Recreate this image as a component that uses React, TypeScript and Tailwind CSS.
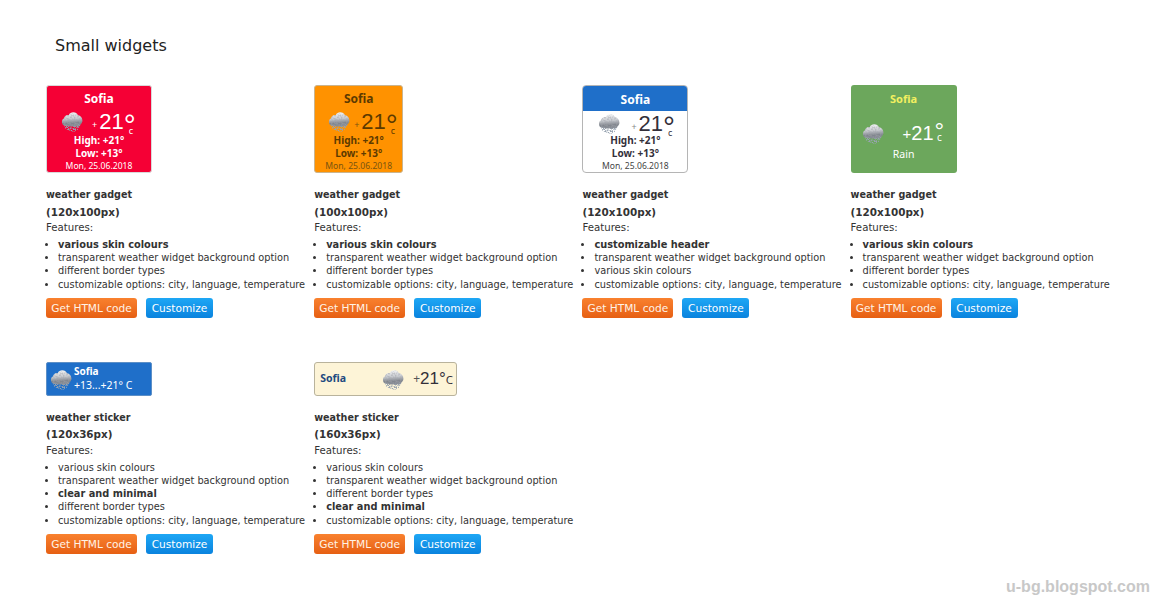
import type { ReactNode } from "react";

const font = "font-['DejaVu_Sans','Liberation_Sans',sans-serif]";
const tahoma = "font-['Noto_Sans','Liberation_Sans',sans-serif]";
const digits = "font-['Liberation_Sans',sans-serif]";

const CloudIcon = ({ className }: { className: string }) => (
  <svg viewBox="0 0 24 24" className={className}>
    <defs>
      <linearGradient id="cl" x1="0.45" y1="0" x2="0.55" y2="1">
        <stop offset="0%" stopColor="#f4f5f6" />
        <stop offset="45%" stopColor="#c6c9ce" />
        <stop offset="75%" stopColor="#80858d" />
        <stop offset="100%" stopColor="#8a9099" />
      </linearGradient>
      <filter id="mottle" x="0" y="0" width="100%" height="100%">
        <feTurbulence type="fractalNoise" baseFrequency="0.55" numOctaves="2" seed="4" result="n" />
        <feColorMatrix
          in="n"
          type="matrix"
          values="0 0 0 0 0.35  0 0 0 0 0.36  0 0 0 0 0.4  1.6 0 0 0 -0.62"
          result="spots"
        />
        <feComposite in="spots" in2="SourceGraphic" operator="in" result="clip" />
        <feMerge>
          <feMergeNode in="SourceGraphic" />
          <feMergeNode in="clip" />
        </feMerge>
      </filter>
      <filter id="stipple" x="0" y="0" width="100%" height="100%">
        <feTurbulence type="fractalNoise" baseFrequency="0.9" numOctaves="1" seed="9" result="n" />
        <feColorMatrix in="n" type="matrix" values="0 0 0 0 0  0 0 0 0 0  0 0 0 0 0  0 5 0 0 -2.200" result="a" />
        <feComposite in="SourceGraphic" in2="a" operator="in" />
      </filter>
    </defs>
    <path d="M3 15c5 2 13 2 19 -.5L20 20l-4 3.500H8L4 20z" fill="#97a3b0" filter="url(#stipple)" />
    <path
      d="M2.800 16.500C.4 15 .4 10.500 3.200 9.400 3.500 6.400 6.500 4.800 8.500 5.600 10 1.400 17 1.400 18.500 5.800c3 .4 5 3 4.800 6 0 2-1 3.500-2.500 4.200-1 2-3 1.200-4.300 1.600-1.500.8-3 .6-4.500 0-1.500.6-3 .4-4 0-1.200.4-2.500 0-3.200-1.100z"
      fill="url(#cl)"
      filter="url(#mottle)"
    />
  </svg>
);

const Temp = ({ plus, color }: { plus: string; color: string }) => (
  <div className={`flex items-start h-[24px] ${color}`}>
    <span className={`mt-[11px] text-[9px] leading-none ${plus}`}>+</span>
    <span className={`ml-[2px] text-[22px] leading-[26px] ${digits}`}>21</span>
    <span className={`relative text-[30px] leading-[32px] h-[24px] w-[11px] ${digits}`}>
      °
      <span className={`absolute left-[5px] top-[17px] text-[9px] leading-none ${tahoma}`}>c</span>
    </span>
  </div>
);

const HighLow = ({ date }: { date: string }) => (
  <div className={`flex flex-col items-center ${tahoma}`}>
    <p className="text-[10px] font-bold leading-[13px]">High: +21°</p>
    <p className="text-[10px] font-bold leading-[12.500px]">Low: +13°</p>
    <p className={`text-[8.600px] leading-[12px] ${date}`}>Mon, 25.06.2018</p>
  </div>
);

const RedWidget = () => (
  <div className={`w-[106px] h-[88px] rounded-[3px] border border-[#d9d9d9] bg-[#f50035] text-white flex flex-col items-center pt-[5px] ${tahoma}`}>
    <p className="text-[12px] font-bold leading-[16px]">Sofia</p>
    <div className="flex w-full items-start gap-[9px] pl-[14px] h-[25px] mt-[2px]">
      <CloudIcon className="w-[22px] h-[24px]" />
      <Temp plus="text-white" color="text-white" />
    </div>
    <HighLow date="text-white" />
  </div>
);

const OrangeWidget = () => (
  <div className={`w-[89px] h-[88px] rounded-[3px] border border-[#c9b48f] bg-[#ff9200] text-[#5c3a00] flex flex-col items-center pt-[5px] ${tahoma}`}>
    <p className="text-[12px] font-bold leading-[16px]">Sofia</p>
    <div className="flex w-full items-start gap-[4px] pl-[13px] h-[25px] mt-[2px]">
      <CloudIcon className="w-[22px] h-[24px]" />
      <Temp plus="text-[#7a5410]" color="text-[#5c3a00]" />
    </div>
    <HighLow date="text-[#7a5410]" />
  </div>
);

const BlueHeaderWidget = () => (
  <div className={`w-[106px] h-[88px] rounded-[4px] border border-[#b5b5b5] bg-white text-[#33303a] flex flex-col items-center overflow-hidden ${tahoma}`}>
    <div className="w-full h-[25px] bg-[#1f6fc9] text-white flex items-center justify-center">
      <p className="text-[12px] font-bold leading-[16px] pt-[2px]">Sofia</p>
    </div>
    <div className="flex w-full items-start gap-[11px] pl-[15px] h-[23px]">
      <CloudIcon className="w-[22px] h-[24px]" />
      <Temp plus="text-[#888]" color="text-[#33303a]" />
    </div>
    <HighLow date="text-[#444]" />
  </div>
);

const GreenWidget = () => (
  <div className={`w-[106px] h-[88px] rounded-[3px] bg-[#6ca75c] text-white flex flex-col items-center pt-[7px] ${tahoma}`}>
    <p className="text-[11px] font-bold leading-[14px] text-[#f2f060]">Sofia</p>
    <div className="flex w-full items-start gap-[19px] pl-[11px] h-[24px] mt-[15px]">
      <CloudIcon className="w-[22px] h-[24px]" />
      <div className="flex items-start">
        <span className={`mt-[5px] text-[15px] leading-none ${digits}`}>+</span>
        <span className={`text-[20px] leading-[24px] ${digits}`}>21</span>
        <span className="flex flex-col items-center leading-[8px] ml-px">
          <span className={`text-[24px] leading-[14px] h-[8px] mt-[3px] ${digits}`}>°</span>
          <span className="text-[10px] leading-[8px] mt-px">c</span>
        </span>
      </div>
    </div>
    <p className="text-[10.500px] leading-[14px] mt-[2px]">Rain</p>
  </div>
);

const BlueSticker = () => (
  <div className={`w-[106px] h-[34px] rounded-[2px] border border-[#5c8fc7] bg-[#1f6fc9] text-white flex gap-[2px] pl-[3px] items-center ${tahoma}`}>
    <CloudIcon className="w-[22px] h-[24px]" />
    <div className="flex flex-col">
      <p className="text-[10px] font-bold leading-[12px]">Sofia</p>
      <p className="text-[10.500px] leading-[16px] whitespace-nowrap">+13...+21° C</p>
    </div>
  </div>
);

const CreamSticker = () => (
  <div className={`w-[143px] h-[34px] rounded-[3px] border border-[#b9b39c] bg-[#fdf4d7] text-[#33303a] flex items-center pl-[5px] ${tahoma}`}>
    <p className="text-[10.500px] font-bold text-[#1d4a80] w-[62px]">Sofia</p>
    <CloudIcon className="w-[22px] h-[24px]" />
    <div className="flex items-center ml-[9px]">
      <span className="text-[12px] text-[#555] leading-none">+</span>
      <span className={`text-[17px] leading-none ${digits}`}>21°</span>
      <span className="text-[11.500px] leading-none mt-[1px]">C</span>
    </div>
  </div>
);

const Buttons = () => (
  <div className="flex gap-[9px] mt-[7px]">
    <button className="w-[91px] h-[20px] rounded-[3px] bg-gradient-to-b from-[#f9812e] to-[#e65f12] text-[#fff3e6] text-[10.600px] leading-none">
      Get HTML code
    </button>
    <button className="w-[67px] h-[20px] rounded-[3px] bg-gradient-to-b from-[#1ea7f5] to-[#0a83de] text-white text-[10.600px] leading-none">
      Customize
    </button>
  </div>
);

type Feature = { label: string; bold?: boolean };

const WidgetCard = ({
  preview,
  size,
  name,
  features,
  previewHeight,
}: {
  preview: ReactNode;
  size: string;
  name: string;
  features: Feature[];
  previewHeight: string;
}) => (
  <div className="text-[#333]">
    <div className={previewHeight}>{preview}</div>
    <p className="text-[9.600px] font-bold leading-[16.500px]">{name}</p>
    <p className="text-[10.400px] font-bold leading-[16.500px]">({size})</p>
    <p className="text-[10.200px] leading-[16.500px] mb-[1.500px]">Features:</p>
    <ul className="list-disc pl-[12px] whitespace-nowrap">
      {features.map((f) => (
        <li key={f.label} className={`leading-[13.200px] ${f.bold ? "text-[9.800px] font-bold" : "text-[9.780px]"}`}>
          {f.label}
        </li>
      ))}
    </ul>
    <Buttons />
  </div>
);

const transparent = "transparent weather widget background option";
const borders = "different border types";
const options = "customizable options: city, language, temperature";

const gadgetFeatures: Feature[] = [
  { label: "various skin colours", bold: true },
  { label: transparent },
  { label: borders },
  { label: options },
];

export default function App() {
  return (
    <div className={`relative h-[600px] overflow-hidden bg-white pl-[46px] pt-[36px] ${font}`}>
      <h2 className="pl-[9px] text-[16px] leading-[19px] text-[#222]">Small widgets</h2>
      <div className="grid grid-cols-[repeat(4,268.200px)] mt-[30px]">
        <WidgetCard preview={<RedWidget />} previewHeight="h-[102px]" name="weather gadget" size="120x100px" features={gadgetFeatures} />
        <WidgetCard preview={<OrangeWidget />} previewHeight="h-[102px]" name="weather gadget" size="100x100px" features={gadgetFeatures} />
        <WidgetCard
          preview={<BlueHeaderWidget />}
          previewHeight="h-[102px]"
          name="weather gadget"
          size="120x100px"
          features={[
            { label: "customizable header", bold: true },
            { label: transparent },
            { label: "various skin colours" },
            { label: options },
          ]}
        />
        <WidgetCard preview={<GreenWidget />} previewHeight="h-[102px]" name="weather gadget" size="120x100px" features={gadgetFeatures} />
      </div>
      <div className="grid grid-cols-[repeat(4,268.200px)] mt-[44px]">
        <WidgetCard
          preview={<BlueSticker />}
          previewHeight="h-[48px]"
          name="weather sticker"
          size="120x36px"
          features={[
            { label: "various skin colours" },
            { label: transparent },
            { label: "clear and minimal", bold: true },
            { label: borders },
            { label: options },
          ]}
        />
        <WidgetCard
          preview={<CreamSticker />}
          previewHeight="h-[48px]"
          name="weather sticker"
          size="160x36px"
          features={[
            { label: "various skin colours" },
            { label: transparent },
            { label: borders },
            { label: "clear and minimal", bold: true },
            { label: options },
          ]}
        />
      </div>
      <p className={`absolute right-[11px] top-[578px] text-[16px] leading-[18px] font-bold ${digits} text-[#c8c8c8]`}>
        u-bg.blogspot.com
      </p>
    </div>
  );
}
